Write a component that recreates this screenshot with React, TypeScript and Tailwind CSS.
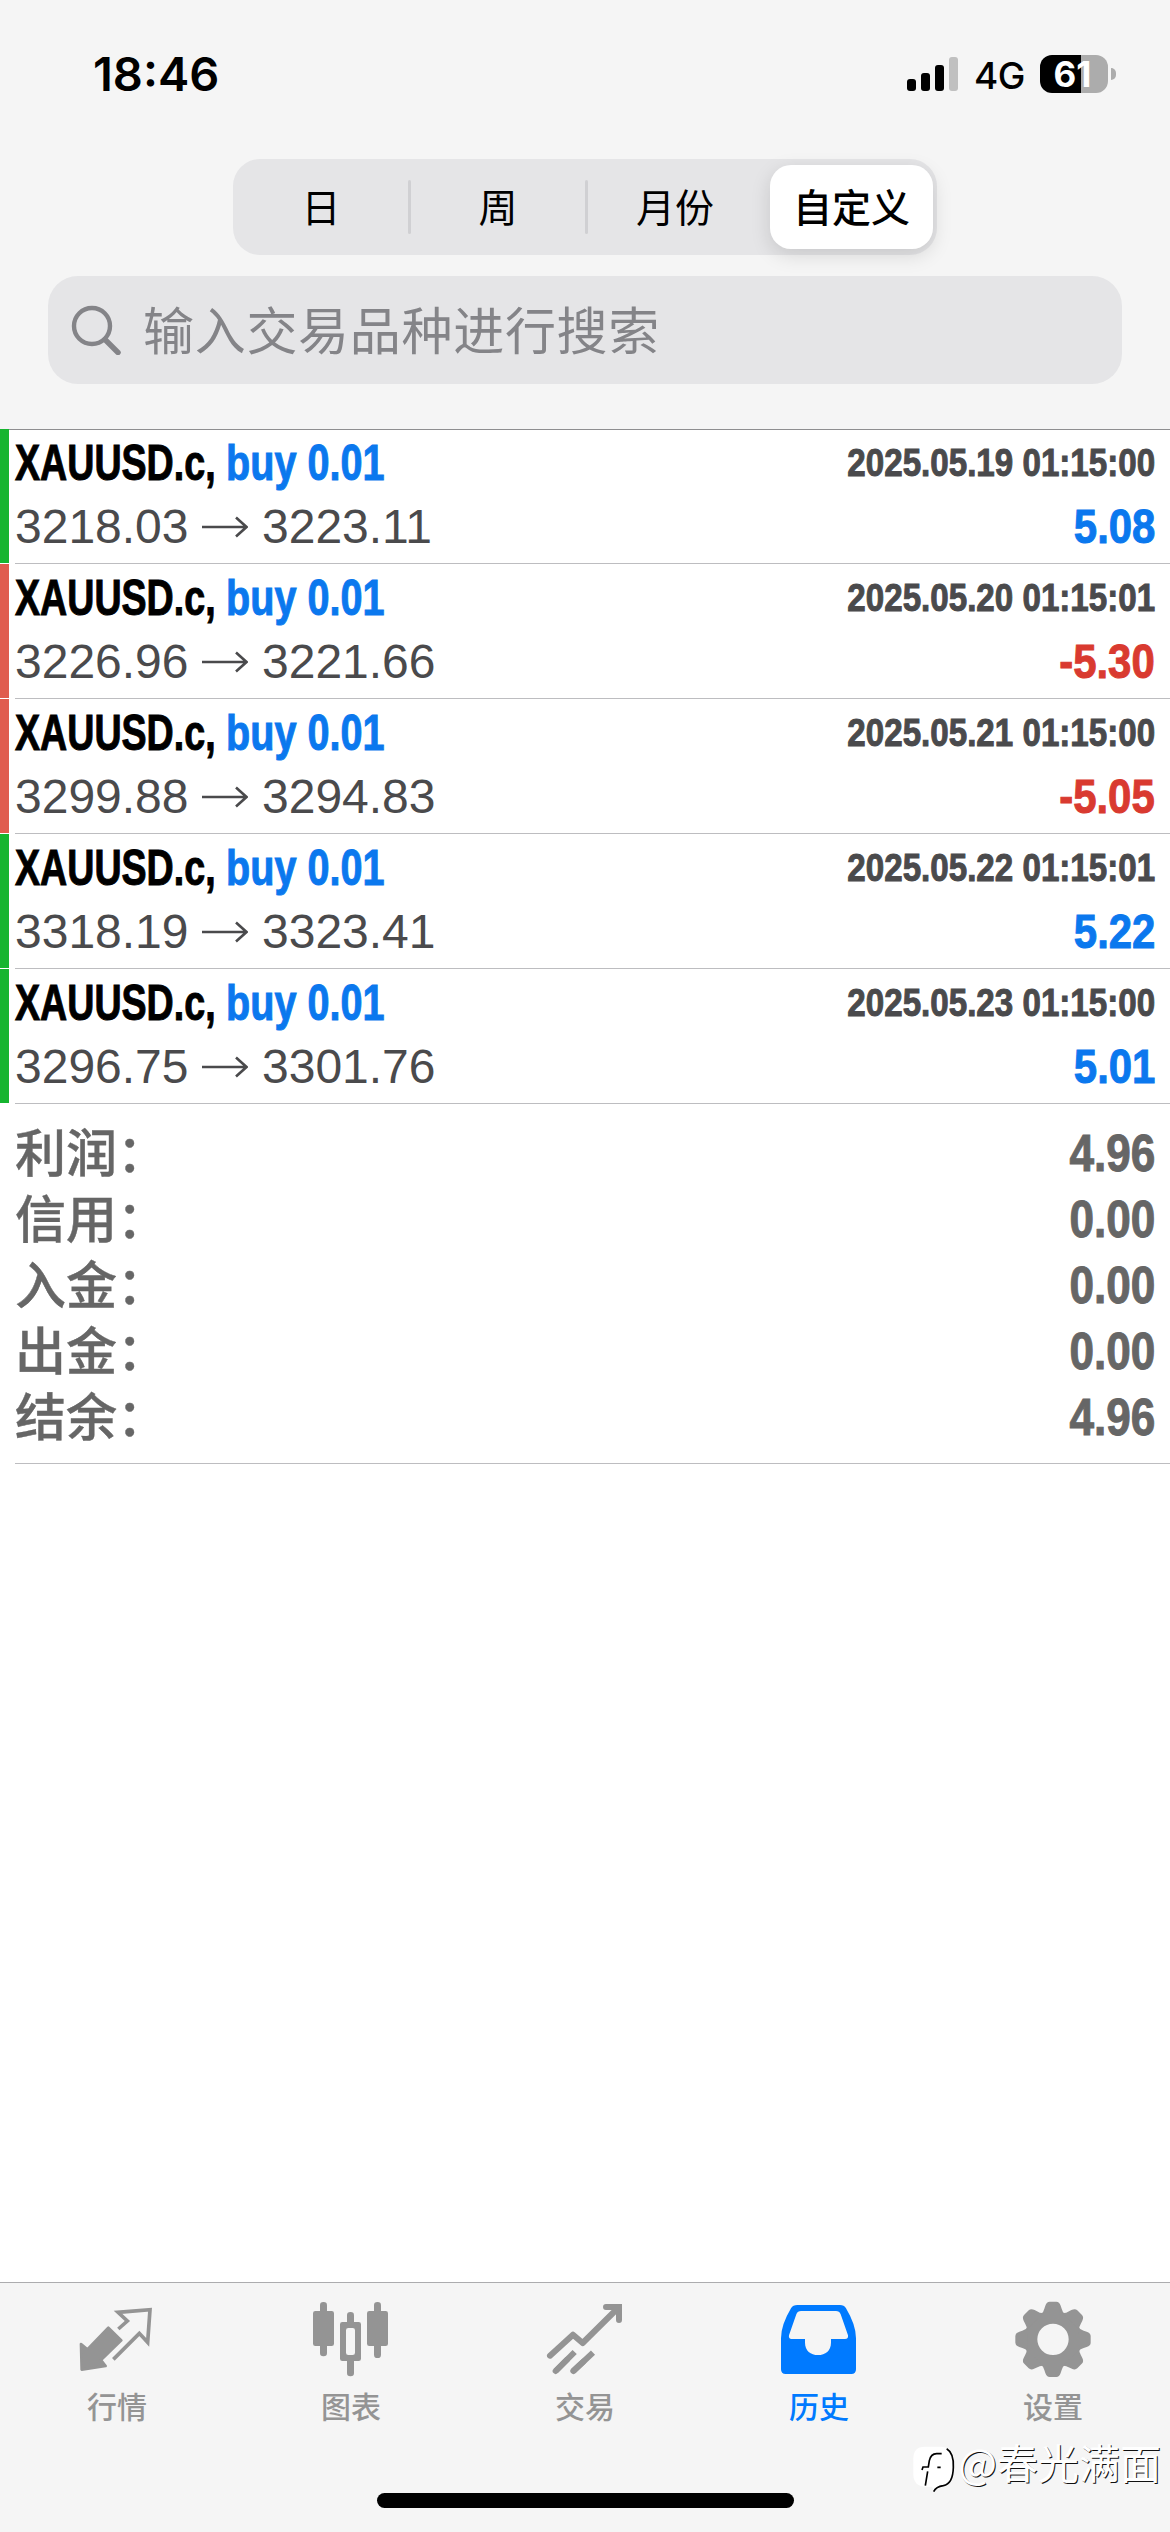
import type { ReactNode } from 'react'
import clsx from 'clsx'

interface Deal {
  open: string
  close: string
  time: string
  profit: string
}

const deals: Deal[] = [
  { open: '3218.03', close: '3223.11', time: '2025.05.19 01:15:00', profit: '5.08' },
  { open: '3226.96', close: '3221.66', time: '2025.05.20 01:15:01', profit: '-5.30' },
  { open: '3299.88', close: '3294.83', time: '2025.05.21 01:15:00', profit: '-5.05' },
  { open: '3318.19', close: '3323.41', time: '2025.05.22 01:15:01', profit: '5.22' },
  { open: '3296.75', close: '3301.76', time: '2025.05.23 01:15:00', profit: '5.01' }
]

const summary = [
  { label: '利润：', value: '4.96' },
  { label: '信用：', value: '0.00' },
  { label: '入金：', value: '0.00' },
  { label: '出金：', value: '0.00' },
  { label: '结余：', value: '4.96' }
]

const StatusBar = () => (
  <div className="flex h-[148px] items-center justify-between pl-[93px] pr-[54px] font-['Inter',sans-serif] text-black">
    <span className="text-[47px] font-semibold">18:46</span>
    <div className="flex items-center">
      <div className="flex h-[34px] items-end gap-[5px]">
        <span className="h-[12px] w-[9px] rounded-[3px] bg-black" />
        <span className="h-[18px] w-[9px] rounded-[3px] bg-black" />
        <span className="h-[26px] w-[9px] rounded-[3px] bg-black" />
        <span className="h-[34px] w-[9px] rounded-[3px] bg-[#c0c0c0]" />
      </div>
      <span className="ml-[16px] mt-[3px] w-[66px] text-[37px] font-medium tracking-[-0.5px]">4G</span>
      <div className="flex h-[38px] w-[68px] items-center justify-center rounded-[12px] bg-[linear-gradient(to_right,#000_60%,#acacac_60%)] pr-[3px] text-[35px] font-bold leading-none text-white">
        61
      </div>
      <span className="ml-[3px] h-[12px] w-[5px] rounded-r-full bg-[#acacac]" />
    </div>
  </div>
)

const Segment = ({ children }: { children: ReactNode }) => (
  <button className="flex w-[176px] items-center justify-center pb-[4px]">{children}</button>
)

const PeriodTabs = () => (
  <div className="mx-auto mt-[11px] flex h-[96px] w-[704px] items-center rounded-[27px] bg-[#e5e5e7] text-[39px] text-black">
    <Segment>日</Segment>
    <span className="-mx-[1px] h-[54px] w-[3px] rounded-full bg-[#d0d0d3]" />
    <Segment>周</Segment>
    <span className="-mx-[1px] h-[54px] w-[3px] rounded-full bg-[#d0d0d3]" />
    <Segment>月份</Segment>
    <button className="ml-[7px] flex h-[84px] w-[163px] items-center justify-center rounded-[21px] bg-white pb-[4px] font-medium shadow-[0_6px_20px_rgba(0,0,0,0.13)]">
      自定义
    </button>
  </div>
)

const SearchBar = () => (
  <div className="mx-[48px] mt-[21px] flex h-[108px] items-center rounded-[30px] bg-[#e5e5e7] pl-[23px] text-[#848488]">
    <svg width="50" height="50" viewBox="0 0 50 50" fill="none" stroke="currentColor">
      <circle cx="21" cy="21" r="18" strokeWidth="4.4" />
      <path d="M34 34.5L47 47.5" strokeWidth="5.4" strokeLinecap="round" />
    </svg>
    <span className="ml-[22px] pb-[4px] text-[51px] leading-none tracking-[0.7px]">输入交易品种进行搜索</span>
  </div>
)

// Bold Liberation Sans squeezed into a condensed cut
const Condensed = ({ className, children }: { className: string; children: ReactNode }) => (
  <span
    className={clsx(
      "inline-block whitespace-nowrap font-['Liberation_Sans',sans-serif] font-bold [-webkit-text-stroke:1px_currentColor]",
      className
    )}
  >
    {children}
  </span>
)

const DealRow = ({ deal, first }: { deal: Deal; first: boolean }) => {
  const loss = deal.profit.startsWith('-')

  return (
    <div className="flex h-[135px]">
      <div className={clsx('h-[134px] w-[9px]', loss ? 'bg-[#e05c4e]' : 'bg-[#16b52f]')} />
      <div className={clsx('flex-1 border-t', first ? 'border-[#8e8e90]' : 'border-transparent')}>
        <div className="ml-[6px] h-[134px] border-b border-[#bdbdc0] pr-[15px] pt-[3px]">
          <div className="flex h-[60px] justify-between leading-[60px]">
            <div className="flex">
              <span className="w-[211px]">
                <Condensed className="origin-left scale-x-[0.752] text-[50px] text-black">XAUUSD.c,</Condensed>
              </span>
              <Condensed className="origin-left scale-x-[0.792] text-[50px] text-[#0b78ee]">buy 0.01</Condensed>
            </div>
            <Condensed className="origin-right scale-x-[0.85] text-[39px] text-[#4a4a4c]">{deal.time}</Condensed>
          </div>
          <div className="mt-[3px] flex h-[60px] justify-between leading-[60px]">
            <div className="flex items-center pt-[1px] font-['Liberation_Sans',sans-serif] text-[48px] text-[#4a4a4c]">
              <span className="w-[187px]">{deal.open}</span>
              <svg width="46" height="22" viewBox="0 0 46 22" fill="none" stroke="currentColor" strokeWidth="2.6">
                <path d="M0 11H44M34 1.5L44.5 11L34 20.5" />
              </svg>
              <span className="ml-[14px]">{deal.close}</span>
            </div>
            <Condensed
              className={clsx('origin-right scale-x-[0.855] text-[49px]', loss ? 'text-[#d93a30]' : 'text-[#0b78ee]')}
            >
              {deal.profit}
            </Condensed>
          </div>
        </div>
      </div>
    </div>
  )
}

const Summary = () => (
  <div className="ml-[15px] border-b border-[#bdbdc0] pb-[13px] pr-[15px] pt-[16px] text-[51px] text-[#666666]">
    {summary.map((item) => (
      <div key={item.label} className="flex h-[66px] justify-between leading-[66px]">
        <span className="-mt-[3px] font-medium [-webkit-text-stroke:0.4px_currentColor]">{item.label}</span>
        <Condensed className="mt-[1px] origin-right scale-x-[0.865]">{item.value}</Condensed>
      </div>
    ))}
  </div>
)

const QuotesIcon = () => (
  <svg width="80" height="80" viewBox="231 90 240 240" fill="none" stroke="currentColor">
    <path
      d="M243 222L262 238L325 173L364 211L303 270L317 288L245 299Z"
      fill="currentColor"
      strokeWidth="8"
      strokeLinejoin="round"
    />
    <path d="M355 177L382 153L354 127L450 119L443 217L418 190L340 268" strokeWidth="11" />
  </svg>
)

const ChartIcon = () => (
  <svg width="80" height="80" viewBox="933 90 240 240" fill="currentColor">
    <rect x="960" y="96" width="21" height="163" rx="10" />
    <rect x="939" y="123" width="63" height="105" rx="7" />
    <rect x="1122" y="96" width="21" height="168" rx="10" />
    <rect x="1101" y="123" width="63" height="105" rx="7" />
    <rect x="1041" y="126" width="21" height="40" rx="10" />
    <rect x="1041" y="260" width="21" height="59" rx="10" />
    <path
      fillRule="evenodd"
      d="M1027 156H1076Q1083 156 1083 163V266Q1083 273 1076 273H1027Q1020 273 1020 266V163Q1020 156 1027 156ZM1045 174Q1038 174 1038 181V248Q1038 255 1045 255H1058Q1065 255 1065 248V181Q1065 174 1058 174Z"
    />
  </svg>
)

const TradeIcon = () => (
  <svg
    width="80"
    height="80"
    viewBox="315 90 240 240"
    fill="none"
    stroke="currentColor"
    strokeWidth="18"
    strokeLinecap="round"
  >
    <path d="M330 257L399 194L428 219L534 114" strokeLinejoin="round" />
    <path d="M498 111H537V150" />
    <path d="M404 246L347 303M459 248L400 303" strokeLinecap="butt" />
    <path d="M347 303L380 270M400 303L430 275" />
  </svg>
)

const HistoryIcon = () => (
  <svg width="80" height="80" viewBox="1017 90 240 240" fill="currentColor" fillRule="evenodd">
    <path d="M1072 105H1200Q1212 105 1218 115Q1248 165 1248 205V298Q1248 312 1234 312H1037Q1023 312 1023 298V205Q1023 165 1053 115Q1059 105 1072 105ZM1083 123Q1073 123 1069 133L1047 196Q1045 207 1055 207H1095V218C1095 242 1112 255 1134 255S1173 242 1173 218V207H1215Q1226 207 1224 196L1202 133Q1198 123 1188 123Z" />
  </svg>
)

const SettingsIcon = () => (
  <svg width="80" height="80" viewBox="-120 -118 240 240" fill="currentColor">
    <path
      fillRule="evenodd"
      d="M0 -85A85 85 0 1 1 0 85A85 85 0 1 1 0 -85ZM0 -47A47 47 0 1 0 0 47A47 47 0 1 0 0 -47Z"
    />
    {[0, 45, 90, 135, 180, 225, 270, 315].map((angle) => (
      <path
        key={angle}
        transform={`rotate(${angle})`}
        d="M-36 -76Q-28 -82 -26 -92L-23 -101Q-19 -113 -10 -113H10Q19 -113 23 -101L26 -92Q28 -82 36 -76Z"
      />
    ))}
  </svg>
)

const tabs = [
  { label: '行情', icon: <QuotesIcon /> },
  { label: '图表', icon: <ChartIcon /> },
  { label: '交易', icon: <TradeIcon /> },
  { label: '历史', icon: <HistoryIcon />, active: true },
  { label: '设置', icon: <SettingsIcon /> }
]

const TabBar = () => (
  <nav className="mt-auto flex h-[250px] flex-col border-t border-[#acacae] bg-[#f5f5f5]">
    <div className="flex pt-[17px]">
      {tabs.map((tab) => (
        <div
          key={tab.label}
          className={clsx('flex flex-1 flex-col items-center', tab.active ? 'text-[#007aff]' : 'text-[#949494]')}
        >
          {tab.icon}
          <span className="mt-[9px] text-[30px] font-medium leading-[32px]">{tab.label}</span>
        </div>
      ))}
    </div>
    <div className="mx-auto mb-[24px] mt-auto h-[15px] w-[417px] rounded-full bg-black" />
  </nav>
)

const Watermark = () => (
  <div className="absolute bottom-[38px] right-[9px] flex items-start">
    <svg width="46" height="50" viewBox="24 28 138 150">
      <path
        d="M62 36H112Q150 38 150 80V110Q150 150 118 154Q98 156 90 170L84 156H62Q28 154 28 118V72Q28 36 62 36Z"
        fill="#fff"
      />
      <path
        d="M128 42Q150 55 148 98Q147 148 118 153Q96 156 89 171"
        fill="none"
        stroke="#000"
        strokeWidth="5"
      />
      <path d="M113 57H98Q80 58 76 78L73 97H57L54 106M71 110L64 153M100 98H110" fill="none" stroke="#000" strokeWidth="5" />
    </svg>
    <span className="-mt-[11px] text-[41px] leading-[56px] text-white [text-shadow:1px_1px_0_#111]">@春光满面</span>
  </div>
)

export default function App() {
  return (
    <div className="relative flex h-[2532px] w-[1170px] flex-col overflow-hidden bg-white font-['Noto_Sans_CJK_SC',sans-serif]">
      <header className="h-[429px] bg-[#f5f5f5]">
        <StatusBar />
        <PeriodTabs />
        <SearchBar />
      </header>
      <main>
        {deals.map((deal, index) => (
          <DealRow key={deal.time} deal={deal} first={index === 0} />
        ))}
        <Summary />
      </main>
      <TabBar />
      <Watermark />
    </div>
  )
}
